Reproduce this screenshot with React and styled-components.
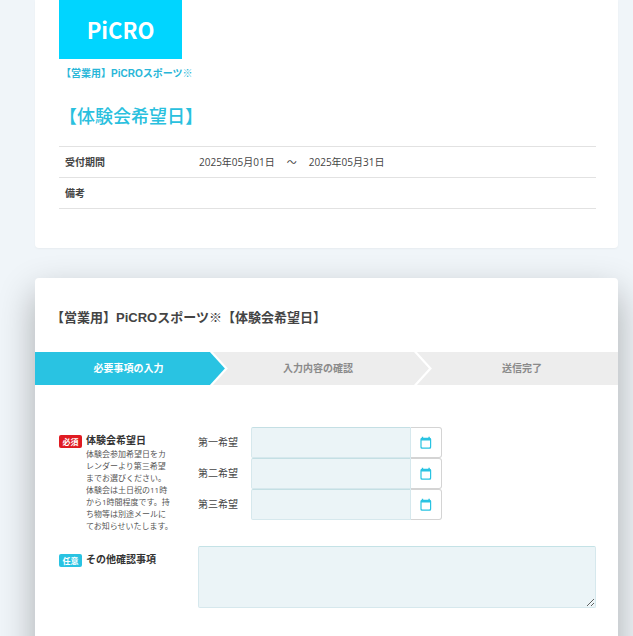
import React from 'react';
import styled, { createGlobalStyle } from 'styled-components';

const GlobalStyle = createGlobalStyle`
  * {
    box-sizing: border-box;
  }

  html {
    scrollbar-width: none;
  }

  body {
    margin: 0;
    background-color: #f0f5f9;
    color: #444;
    font-family: 'Open Sans', 'Noto Sans CJK JP', sans-serif;
    font-size: 10px;
    line-height: 15px;
  }
`;

const Page = styled.main`
  display: flex;
  flex-direction: column;
  gap: 30px;
  padding: 0 15px 0 35px;
`;

const Card = styled.section`
  background-color: #fff;
  border-radius: ${(props) => (props.$raised ? '4px 4px 0 0' : '0 0 4px 4px')};
  box-shadow: ${(props) =>
    props.$raised ? '0 15px 36px rgba(0, 0, 0, 0.3)' : '0 1px 2px rgba(0, 0, 0, 0.04)'};
`;

const Summary = styled(Card)`
  padding: 0 22px 39px 24px;
`;

const FormCard = styled(Card)`
  padding-bottom: 60px;
`;

const Logo = styled.div`
  display: flex;
  align-items: center;
  justify-content: center;
  width: 123px;
  height: 59px;
  background-color: #00d5ff;
  color: #fff;
  font-family: 'Noto Sans CJK JP', sans-serif;
  font-size: 22px;
  font-weight: 700;
  line-height: 59px;
`;

const Organizer = styled.a`
  display: block;
  padding: 7px 2px 0;
  color: #29b6d8;
  font-family: 'Liberation Sans', 'Noto Sans CJK JP', sans-serif;
  font-weight: 600;
  text-decoration: none;
`;

const EventTitle = styled.h1`
  margin: 22px 0 17px;
  color: #29c0de;
  font-size: 18px;
  font-weight: 500;
  line-height: 26px;
`;

const InfoTable = styled.table`
  width: 100%;
  border-collapse: collapse;
  border-top: 1px solid #e2e2e2;

  th,
  td {
    height: 31px;
    padding: 0 6px;
    border-bottom: 1px solid #e2e2e2;
    text-align: left;
  }

  th {
    width: 134px;
    font-weight: 700;
  }
`;

const Period = styled.div`
  display: flex;
  gap: 12px;
`;

const FormTitle = styled.h2`
  margin: 0;
  padding: 30px 16px 24px;
  font-family: 'Liberation Sans', 'Noto Sans CJK JP', sans-serif;
  font-size: 13px;
  font-weight: 700;
  line-height: 20px;
`;

const Steps = styled.ol`
  display: grid;
  grid-template-columns: 30% 35% 35%;
  margin: 0;
  padding: 0;
  list-style: none;
`;

const Step = styled.li`
  position: relative;
  height: 33px;
  padding-left: 12px;
  background-color: ${(props) => (props.$active ? '#29c3e2' : '#ededed')};
  color: ${(props) => (props.$active ? '#fff' : '#8a8a8a')};
  font-weight: 700;
  line-height: 33px;
  text-align: center;

  &:not(:last-child)::before,
  &:not(:last-child)::after {
    content: '';
    position: absolute;
    z-index: 1;
    top: 0;
    left: 100%;
    width: 15px;
    height: 100%;
    background-color: inherit;
    clip-path: polygon(0 0, 100% 50%, 0 100%);
  }

  /* white edge that sticks out behind the arrow head */
  &:not(:last-child)::before {
    width: 18px;
    background-color: #fff;
    clip-path: polygon(0 0, 3px 0, 100% 50%, 3px 100%, 0 100%);
  }
`;

const Fields = styled.form`
  display: grid;
  grid-template-columns: 116px 1fr;
  gap: 14px 23px;
  padding: 42px 22px 0 24px;
`;

const FieldHead = styled.div`
  display: grid;
  grid-template-columns: 23px 1fr;
  align-content: start;
  column-gap: 4px;
  padding-top: 6px;
`;

const Badge = styled.span`
  height: 13px;
  margin-top: 2px;
  border-radius: 2px;
  background-color: ${(props) => (props.$required ? '#e01b22' : '#29c3e2')};
  color: #fff;
  font-size: 8px;
  font-weight: 700;
  line-height: 13px;
  text-align: center;
`;

const FieldName = styled.label`
  color: #333;
  font-weight: 700;
`;

const Note = styled.p`
  grid-column: 2;
  margin: 0;
  color: #555;
  font-size: 8px;
  line-height: 12px;
  white-space: nowrap;
`;

const DateRow = styled.div`
  display: grid;
  grid-template-columns: 53px 160px 31px;
  align-items: center;
  height: 31px;
`;

const DateInput = styled.input`
  width: 100%;
  height: 31px;
  padding: 0 8px;
  border: 1px solid #d6e8ed;
  border-top-color: #c4dfe4;
  border-radius: 2px 0 0 2px;
  background-color: #ebf4f7;
  font: inherit;
  outline: none;
`;

const PickerButton = styled.button`
  display: flex;
  align-items: center;
  justify-content: center;
  height: 31px;
  padding: 0;
  border: 1px solid #d4d4d4;
  border-left: none;
  border-radius: 0 3px 3px 0;
  background-color: #fff;
  color: #29c3e2;
`;

const Textarea = styled.textarea`
  display: block;
  width: 100%;
  height: 62px;
  padding: 8px;
  border: 1px solid #d6e8ed;
  border-top-color: #c4e2e6;
  border-radius: 2px;
  background-color: #ebf4f7;
  font: inherit;
  outline: none;
  resize: vertical;
`;

const CalendarIcon = () => (
  <svg width="12" height="14" viewBox="0 0 12 14" aria-hidden="true">
    <path
      fill="currentColor"
      fillRule="evenodd"
      d="M1.8 .8h1.4v1h5.2v-1h1.4v1a1.5 1.5 0 0 1 1.4 1.5v8a1.5 1.5 0 0 1-1.5 1.5H1.9a1.5 1.5 0 0 1-1.5-1.5v-8A1.5 1.5 0 0 1 1.8 1.8zM1.6 4.6v6.2c0 .5.3.8.8.8h6.8c.5 0 .8-.3.8-.8V4.6z"
    />
  </svg>
);

const choices = ['第一希望', '第二希望', '第三希望'];

const App = () => (
  <>
    <GlobalStyle />
    <Page lang="ja">
      <Summary>
        <Logo>PiCRO</Logo>
        <Organizer href="#">【営業用】PiCROスポーツ※</Organizer>
        <EventTitle>【体験会希望日】</EventTitle>
        <InfoTable>
          <tbody>
            <tr>
              <th scope="row">受付期間</th>
              <td>
                <Period>
                  <span>2025年05月01日</span>
                  <span>〜</span>
                  <span>2025年05月31日</span>
                </Period>
              </td>
            </tr>
            <tr>
              <th scope="row">備考</th>
              <td />
            </tr>
          </tbody>
        </InfoTable>
      </Summary>

      <FormCard $raised>
        <FormTitle>【営業用】PiCROスポーツ※【体験会希望日】</FormTitle>
        <Steps>
          <Step $active>必要事項の入力</Step>
          <Step>入力内容の確認</Step>
          <Step>送信完了</Step>
        </Steps>
        <Fields>
          <FieldHead>
            <Badge $required>必須</Badge>
            <FieldName htmlFor="choice-0">体験会希望日</FieldName>
            <Note>
              体験会参加希望日をカ
              <br />
              レンダーより第三希望
              <br />
              までお選びください。
              <br />
              体験会は土日祝の11時
              <br />
              から1時間程度です。持
              <br />
              ち物等は別途メールに
              <br />
              てお知らせいたします。
            </Note>
          </FieldHead>
          <div>
            {choices.map((choice, i) => (
              <DateRow key={choice}>
                <label htmlFor={`choice-${i}`}>{choice}</label>
                <DateInput id={`choice-${i}`} type="text" />
                <PickerButton type="button" aria-label={`${choice}の日付を選択`}>
                  <CalendarIcon />
                </PickerButton>
              </DateRow>
            ))}
          </div>
          <FieldHead>
            <Badge>任意</Badge>
            <FieldName htmlFor="remarks">その他確認事項</FieldName>
          </FieldHead>
          <Textarea id="remarks" />
        </Fields>
      </FormCard>
    </Page>
  </>
);

export default App;
